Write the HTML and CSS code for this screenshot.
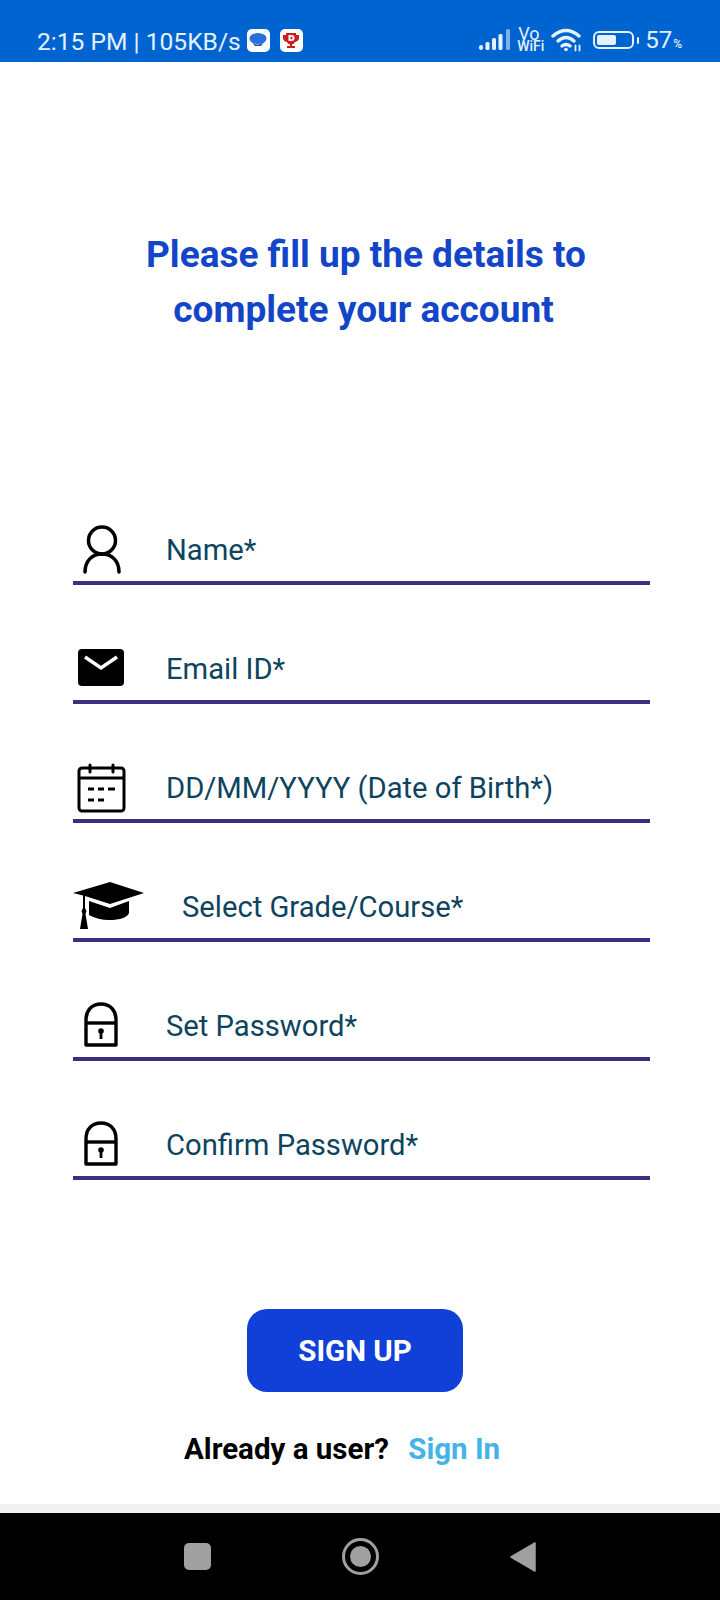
FILE: index.html
```html
<!DOCTYPE html>
<html lang="en">
<head>
<meta charset="utf-8">
<title>Complete your account</title>
<link rel="stylesheet" href="styles.css">
</head>
<body>
<div class="screen">
  <header class="status">
    <div class="status-left">
      <span class="clock">2:15 PM | 105KB/s</span>
      <span class="app-badge first">
        <svg viewBox="0 0 22 22" width="22" height="22"><ellipse cx="11" cy="9.500" rx="8.500" ry="5.500" fill="#2a6fdc"/><path d="M5 13q6 5 12 0l-3 4h-6z" fill="#0e57c4"/></svg>
      </span>
      <span class="app-badge second">
        <svg viewBox="0 0 22 22" width="22" height="22"><path d="M3 6h3V4h10v2h3v3q0 3-4 4-1 2-3 2.500V17h3v2H7v-2h3v-1.500Q8 15 7 13 3 12 3 9z" fill="#c9201f"/><path d="M8.500 6h3q3 0 3 3t-3 3h-3z" fill="#fff"/><path d="M10.500 7.800h1q1 0 1 1.200t-1 1.200h-1z" fill="#c9201f"/></svg>
      </span>
    </div>
    <div class="status-right">
      <svg class="signal" viewBox="0 0 32 22" width="32" height="22">
        <rect x="0" y="16" width="4" height="5" rx="2" fill="#e8f2ff"/>
        <rect x="6.500" y="13" width="4" height="8" rx="1.500" fill="#e8f2ff"/>
        <rect x="13" y="9" width="4" height="12" rx="1.500" fill="#e8f2ff"/>
        <rect x="19.500" y="5" width="4" height="16" rx="1.500" fill="#e8f2ff"/>
        <rect x="27" y="0" width="4" height="21" rx="1.500" fill="#7fb0ea"/>
      </svg>
      <span class="vowifi"><span class="vo">Vo</span><span class="wi">WiFi</span></span>
      <svg class="wifi" viewBox="0 0 32 24" width="32" height="24" fill="none" stroke="#e8f2ff" stroke-width="3.400" stroke-linecap="round">
        <path d="M2 8q13-11 26 0"/>
        <path d="M7 13q8-7 16 0"/>
        <path d="M11 18q4-3 8 0"/>
        <circle cx="15" cy="21.500" r="1.800" fill="#e8f2ff" stroke="none"/>
        <path d="M24.500 22.500v-5M28.500 22.500v-5" stroke-width="1.800"/>
      </svg>
      <span class="battery"><span class="battery-fill"></span></span>
      <span class="battery-tip"></span>
      <span class="percent">57<small>%</small></span>
    </div>
  </header>

  <main class="content">
    <h1 class="title">Please fill up the details to<br><span class="title-second">complete your account</span></h1>

    <form class="fields">
      <div class="field">
        <span class="icon icon-person">
          <svg viewBox="0 0 40 50" width="40" height="50" fill="none" stroke="#000" stroke-width="3.500" stroke-linecap="round"><circle cx="20" cy="15.500" r="13.500"/><path d="M3 47c0-11 7-18 17-18s17 7 17 18"/></svg>
        </span>
        <span class="label">Name*</span>
      </div>
      <div class="field">
        <span class="icon icon-mail">
          <svg viewBox="0 0 48 38" width="48" height="38"><rect width="46" height="37" x="1" y="0" rx="4" fill="#000"/><path d="M8 8l16 11 16-11" fill="none" stroke="#fff" stroke-width="3.500"/></svg>
        </span>
        <span class="label">Email ID*</span>
      </div>
      <div class="field">
        <span class="icon icon-date">
          <svg viewBox="0 0 50 50" width="50" height="50" fill="none" stroke="#000" stroke-width="3"><rect x="2" y="5" width="45" height="43" rx="3"/><path d="M2 15h45"/><path d="M13 2v7M36 2v7" stroke-linecap="round"/><path d="M11 26h6M21 26h6M31 26h7M11 37h6M21 37h6"/></svg>
        </span>
        <span class="label">DD/MM/YYYY (Date of Birth*)</span>
      </div>
      <div class="field">
        <span class="icon icon-grad">
          <svg viewBox="0 0 72 48" width="72" height="48"><path d="M37 0L71 11 37 22 12 14v12l1.500 3-1 3 2.500 15H7l2.500-15-1-3 1.500-3V13.500L0 11z" fill="#000"/><path d="M16 19l21 7 19-7v12q-3 7-20 7-11 0-20-5z" fill="#000"/></svg>
        </span>
        <span class="label">Select Grade/Course*</span>
      </div>
      <div class="field">
        <span class="icon icon-lock">
          <svg viewBox="0 0 40 46" width="40" height="46" fill="none" stroke="#000" stroke-width="3.400"><path d="M5 44V19C5 9 11 3 20 3s15 6 15 16v25z" stroke-linejoin="round"/><path d="M5 22h30"/><circle cx="20" cy="30" r="2.800" fill="#000" stroke="none"/><path d="M20 31v7" stroke-width="2.800"/></svg>
        </span>
        <span class="label">Set Password*</span>
      </div>
      <div class="field">
        <span class="icon icon-lock">
          <svg viewBox="0 0 40 46" width="40" height="46" fill="none" stroke="#000" stroke-width="3.400"><path d="M5 44V19C5 9 11 3 20 3s15 6 15 16v25z" stroke-linejoin="round"/><path d="M5 22h30"/><circle cx="20" cy="30" r="2.800" fill="#000" stroke="none"/><path d="M20 31v7" stroke-width="2.800"/></svg>
        </span>
        <span class="label">Confirm Password*</span>
      </div>
    </form>

    <button class="signup" type="button">SIGN UP</button>
    <p class="signin">Already a user? <a class="signin-link" href="#">Sign In</a></p>
  </main>

  <div class="strip"></div>
  <nav class="navbar">
    <span class="nav-square"></span>
    <span class="nav-circle"><span class="nav-dot"></span></span>
    <svg class="nav-back" viewBox="0 0 26 32" width="26" height="32"><path d="M25 2v28L1 16z" fill="#a0a0a0" stroke="#a0a0a0" stroke-width="1.500" stroke-linejoin="round"/></svg>
  </nav>
</div>
</body>
</html>
```

FILE: styles.css
```css
* { box-sizing: border-box; }
html, body { margin: 0; padding: 0; }
body { background: #fff; font-family: Roboto, "Liberation Sans", sans-serif; }
.screen { width: 720px; height: 1600px; display: flex; flex-direction: column; overflow: hidden; }

.status { height: 62px; flex: none; background: #0064d0; color: #e4f1ff; display: flex; align-items: center; justify-content: space-between; padding: 18px 38px 0 37px; }
.status-left, .status-right { display: flex; align-items: center; }
.clock { font-size: 24.600px; line-height: 28px; margin-top: 4px; }
.app-badge { width: 23px; height: 23px; border-radius: 5px; background: #fff; display: flex; align-items: center; justify-content: center; }
.app-badge.first { margin-left: 6px; }
.app-badge.second { margin-left: 10px; }
.signal { margin-right: 6px; }
.vowifi { display: flex; flex-direction: column; width: 28px; margin-right: 6px; }
.vo { font-size: 18px; line-height: 13px; padding-left: 1px; }
.wi { font-size: 14px; line-height: 13px; font-weight: 500; }
.wifi { margin-right: 10px; }
.battery { width: 41px; height: 18px; border: 2px solid #e4f1ff; border-radius: 6px; padding: 2px; display: block; }
.battery-fill { display: block; width: 19px; height: 10px; background: #e4f1ff; border-radius: 2px; }
.battery-tip { width: 2px; height: 7px; background: #e4f1ff; margin: 0 6px 0 3px; border-radius: 1px; }
.percent { font-size: 24px; line-height: 28px; margin-top: 4px; }
.percent small { font-size: 12px; font-weight: 500; margin-left: 1px; }

.content { flex: 1; display: flex; flex-direction: column; }
.title { margin: 165px 0 0; padding-left: 12px; font-size: 37px; line-height: 55px; font-weight: 700; color: #1245c8; text-align: center; }
.title-second { display: inline-block; padding-right: 5px; }
.fields { margin: 184px 73px 129px; display: flex; flex-direction: column; gap: 55px; width: 577px; }
.field { height: 64px; border-bottom: 4px solid #39307f; display: flex; align-items: flex-end; padding-bottom: 6px; }
.icon { width: 93px; flex: none; display: flex; align-items: flex-end; }
.icon-person svg { margin-left: 9px; }
.icon-mail svg { margin-left: 4px; margin-bottom: 7px; }
.icon-date svg { margin-left: 4px; }
.icon-grad { width: 109px; }
.icon-grad svg { margin-bottom: 2px; }
.icon-lock svg { margin-left: 8px; margin-bottom: 4px; }
.label { font-size: 29.200px; line-height: 36px; color: #0c4460; margin-bottom: 7px; }

.signup { display: block; width: 216px; height: 83px; margin: 0 0 0 247px; border: 0; border-radius: 20px; background: #1140d8; color: #fff; font: 700 29.500px Roboto, "Liberation Sans", sans-serif; }
.signin { margin: 39px 0 0 184px; font-size: 29.500px; line-height: 36px; font-weight: 700; color: #000; }
.signin-link { color: #42b4ea; text-decoration: none; margin-left: 12px; }

.strip { height: 9px; flex: none; background: #f0f0f0; }
.navbar { height: 87px; flex: none; background: #000; display: flex; align-items: center; padding: 0 184px; justify-content: space-between; }
.nav-square { width: 27px; height: 27px; background: #a0a0a0; border-radius: 5px; }
.nav-circle { width: 37px; height: 37px; border: 3px solid #a0a0a0; border-radius: 50%; display: flex; align-items: center; justify-content: center; }
.nav-dot { width: 21px; height: 21px; border-radius: 50%; background: #a0a0a0; }
.nav-back { display: block; }
```
